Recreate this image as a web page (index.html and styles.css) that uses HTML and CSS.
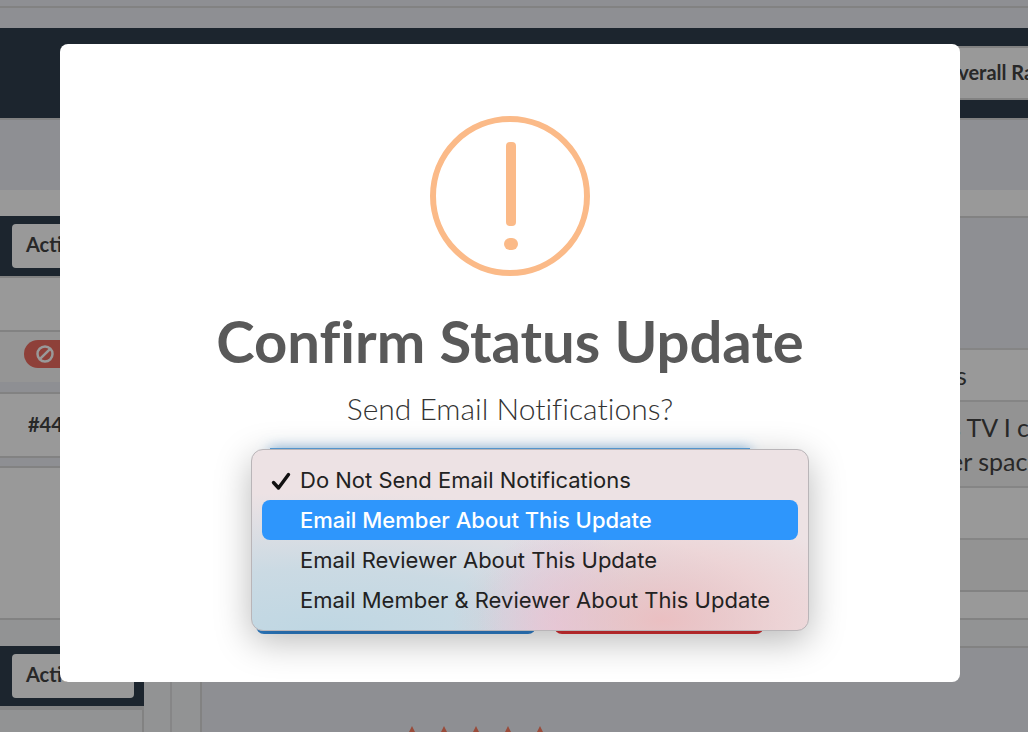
FILE: index.html
```html
<!DOCTYPE html>
<html lang="en">
<head>
    <meta charset="UTF-8">
    <meta name="viewport" content="width=device-width, initial-scale=1.0">
    <title>Confirm Status Update</title>
    <link rel="stylesheet" href="styles.css">
</head>
<body>
    <div class="page">
        <div class="top-strip"></div>
        <header class="header">
            <button type="button" class="rating-btn">Overall Rating</button>
        </header>
        <div class="sub-header"></div>

        <section class="records">
            <div class="side">
                <div class="action-bar">
                    <button type="button" class="action-btn">Actions</button>
                </div>
                <div class="side-row blank"></div>
                <div class="side-row status">
                    <span class="pill">
                        <svg viewBox="0 0 18 18" width="18" height="18" aria-hidden="true">
                            <circle cx="9" cy="9" r="7.5"/>
                            <path d="M3.8 14.2 14.2 3.8"/>
                        </svg>
                    </span>
                </div>
                <div class="side-row number">#4412</div>
                <div class="side-row rest"></div>
            </div>
            <div class="details">
                <div class="details-head"></div>
                <table class="details-table">
                    <tr><th></th><td>is</td></tr>
                    <tr><th></th><td>s TV I could<br>er space</td></tr>
                    <tr><th></th><td></td></tr>
                    <tr><th></th><td></td></tr>
                </table>
            </div>
        </section>

        <section class="records-next">
            <div class="next-side">
                <div class="next-panel">
                    <div class="action-bar">
                        <button type="button" class="action-btn">Actions</button>
                    </div>
                </div>
            </div>
            <div class="review">
                <div class="stars">
                    <svg viewBox="0 0 24 24"><path d="M12 0l4 8 8 .8-6.400 5.700 1.900 8.500L12 18.500 4.500 23l1.900-8.500L0 8.800 8 8z"/></svg>
                    <svg viewBox="0 0 24 24"><path d="M12 0l4 8 8 .8-6.400 5.700 1.900 8.500L12 18.500 4.500 23l1.900-8.500L0 8.800 8 8z"/></svg>
                    <svg viewBox="0 0 24 24"><path d="M12 0l4 8 8 .8-6.400 5.700 1.900 8.500L12 18.500 4.500 23l1.900-8.500L0 8.800 8 8z"/></svg>
                    <svg viewBox="0 0 24 24"><path d="M12 0l4 8 8 .8-6.400 5.700 1.900 8.500L12 18.500 4.500 23l1.900-8.500L0 8.800 8 8z"/></svg>
                    <svg viewBox="0 0 24 24"><path d="M12 0l4 8 8 .8-6.400 5.700 1.900 8.500L12 18.500 4.500 23l1.900-8.500L0 8.800 8 8z"/></svg>
                </div>
            </div>
        </section>
    </div>

    <div class="overlay">
        <div class="modal" role="dialog" aria-labelledby="modalTitle">
            <svg class="warning-icon" viewBox="0 0 160 160" aria-hidden="true">
                <circle cx="80" cy="80" r="77"/>
                <rect x="76" y="26" width="10" height="84" rx="4"/>
                <rect x="74" y="122" width="14" height="12" rx="6"/>
            </svg>
            <h1 id="modalTitle">Confirm Status Update</h1>
            <label for="notify">Send Email Notifications?</label>
            <div class="select-wrap">
                <select id="notify">
                    <option>Do Not Send Email Notifications</option>
                    <option>Email Member About This Update</option>
                    <option>Email Reviewer About This Update</option>
                    <option>Email Member &amp; Reviewer About This Update</option>
                </select>
                <div class="menu" role="listbox">
                    <div class="menu-item" role="option" aria-selected="true">
                        <svg class="check" viewBox="0 0 20 20" aria-hidden="true"><path d="M2.500 11.500 7.500 17 17.500 3.500"/></svg>
                        Do Not Send Email Notifications
                    </div>
                    <div class="menu-item active" role="option">Email Member About This Update</div>
                    <div class="menu-item" role="option">Email Reviewer About This Update</div>
                    <div class="menu-item" role="option">Email Member &amp; Reviewer About This Update</div>
                </div>
            </div>
            <div class="modal-buttons">
                <button type="button" class="btn confirm" aria-label="Confirm"></button>
                <button type="button" class="btn cancel" aria-label="Cancel"></button>
            </div>
        </div>
    </div>
</body>
</html>
```
FILE: styles.css
```css
/* styles.css */
* {
    box-sizing: border-box;
}

body {
    font-family: Lato, "Liberation Sans", sans-serif;
    font-variant-ligatures: none;
    color: #444;
    margin: 0;
    height: 100vh;
    overflow: hidden;
}

.page {
    display: flex;
    flex-direction: column;
    min-height: 100vh;
    background-color: #edeff6;
}

.top-strip {
    height: 8px;
    border-bottom: 2px solid #d9d9d9;
    margin-bottom: 20px;
}

.header {
    display: flex;
    justify-content: flex-end;
    padding: 18px 0;
    background-color: #2f3f4d;
}

.rating-btn {
    width: 100px;
    height: 54px;
    padding: 0 0 2px 12px;
    border: 2px solid #d9d9d9;
    border-right: none;
    background-color: #fff;
    color: #444;
    font: bold 20px Lato, sans-serif;
    text-align: left;
    white-space: nowrap;
    overflow: hidden;
}

.sub-header {
    height: 72px;
    border-top: 2px solid #d9d9d9;
}

/* records */
.records {
    display: flex;
    padding-top: 26px;
    background-color: #fff;
    border-bottom: 2px solid #d9d9d9;
}

.side {
    display: flex;
    flex-direction: column;
    width: 144px;
}

.action-bar {
    padding: 8px 10px 8px 12px;
    background-color: #2f3f4d;
}

.action-btn {
    display: block;
    width: 100%;
    height: 44px;
    padding: 0 14px 4px;
    border: none;
    border-radius: 4px;
    background-color: #fff;
    color: #444;
    font: bold 20px Lato, sans-serif;
    text-align: left;
}

.side-row {
    border-top: 2px solid #d9d9d9;
}

.blank {
    height: 54px;
}

.status {
    height: 52px;
    padding: 8px 0 0 24px;
    background-color: #f8f8f8;
}

.pill {
    display: flex;
    align-items: center;
    height: 28px;
    padding-left: 12px;
    border-radius: 14px;
    background-color: #ed6b5f;
}

.pill svg {
    fill: none;
    stroke: #fff;
    stroke-width: 2.5;
}

.number {
    height: 66px;
    padding-left: 28px;
    border-bottom: 2px solid #d9d9d9;
    box-shadow: 0 -10px #edeff6, 0 8px #edeff6;
    margin: 10px 0 8px;
    font-size: 20px;
    font-weight: bold;
    line-height: 60px;
}

.rest {
    flex: 1;
}

.details {
    flex: 1;
    min-width: 0;
    margin-left: 56px;
    padding-bottom: 26px;
}

.details-head {
    height: 132px;
    border-top: 2px solid #d9d9d9;
    background-color: #edeff6;
}

.details-table {
    width: 100%;
    table-layout: fixed;
    border-collapse: separate;
    border-spacing: 0;
    border-bottom: 2px solid #d9d9d9;
    font-size: 25px;
    line-height: 34px;
}

.details-table th,
.details-table td {
    height: 52px;
    padding: 8px 0;
    border-top: 2px solid #dedede;
}

.details-table td {
    width: 78px;
    white-space: nowrap;
    overflow: hidden;
}

.details-table tr:nth-child(even) {
    background-color: #f6f6f6;
}

/* next record */
.records-next {
    display: flex;
    flex: 1;
    background-color: #f4f5f7;
}

.next-side {
    display: flex;
    width: 172px;
    padding-top: 26px;
    border-right: 2px solid #e0e0e2;
}

.next-panel {
    width: 144px;
    border-right: 2px solid #d9d9d9;
}

.next-panel .action-bar {
    margin-right: -2px;
    border-bottom: 4px solid #dedede;
    height: 64px;
}

.review {
    flex: 1;
    margin: 26px 0 0 28px;
    padding: 78px 0 0 196px;
    border-top: 2px solid #d9d9d9;
    border-left: 2px solid #d9d9d9;
    background-color: #edeff6;
}

.stars {
    display: flex;
    gap: 4px;
    height: 6px;
    overflow: hidden;
}

.stars svg {
    width: 28px;
    height: 28px;
    flex: none;
    fill: #ff7d61;
}

/* modal */
.overlay {
    position: fixed;
    inset: 0;
    display: flex;
    align-items: flex-start;
    padding: 44px 68px 50px 60px;
    background-color: rgba(0, 0, 0, 0.4);
}

.modal {
    flex: 1;
    display: flex;
    flex-direction: column;
    align-items: center;
    padding: 72px 20px 48px;
    border-radius: 8px;
    background-color: #fff;
}

.warning-icon {
    width: 160px;
    height: 160px;
    fill: #fbba88;
}

.warning-icon circle {
    fill: none;
    stroke: #fbba88;
    stroke-width: 6;
}

h1 {
    margin: 30px 0 0;
    color: #595959;
    font-size: 58px;
    font-weight: bold;
    line-height: 70px;
}

label {
    margin-top: 12px;
    color: #333;
    font-size: 30px;
    font-weight: 300;
    line-height: 40px;
}

.select-wrap {
    position: relative;
    width: 480px;
    margin-top: 20px;
}

select {
    display: block;
    width: 100%;
    height: 62px;
    border: 2px solid #5aa0dc;
    border-radius: 0;
    background-color: #fff;
    box-shadow: 0 0 12px rgba(66, 145, 215, 0.6);
    font-size: 24px;
}

/* open list lies over the select and the buttons */
.menu {
    position: absolute;
    top: 1px;
    left: -19px;
    right: -59px;
    padding: 10px;
    border: 1px solid #b9b5b8;
    border-radius: 12px;
    background:
        radial-gradient(ellipse 210px 110px at 410px 170px, rgba(236, 188, 190, 0.9), transparent),
        radial-gradient(ellipse 80px 120px at 305px 182px, rgba(228, 205, 230, 0.9), transparent),
        radial-gradient(ellipse 460px 140px at 70px 182px, #bfd7e3, rgba(194, 216, 227, 0.8) 45%, transparent),
        #ede2e4;
    box-shadow: 0 10px 36px rgba(0, 0, 0, 0.28);
    color: #222;
    font-family: Inter, sans-serif;
    font-size: 22px;
    line-height: 40px;
}

.menu-item {
    position: relative;
    padding-left: 38px;
    border-radius: 8px;
    white-space: nowrap;
}

.menu-item.active {
    background-color: #2e96fc;
    color: #fff;
    font-weight: 500;
}

.check {
    position: absolute;
    top: 11px;
    left: 9px;
    width: 20px;
    height: 20px;
    fill: none;
    stroke: #111;
    stroke-width: 3.4;
    stroke-linecap: round;
    stroke-linejoin: round;
}

.modal-buttons {
    display: flex;
    gap: 18px;
    margin-top: 70px;
}

.btn {
    height: 54px;
    border: none;
    border-radius: 8px;
    color: #fff;
}

.confirm {
    width: 280px;
    background-color: #2f80cc;
}

.cancel {
    width: 210px;
    background-color: #d83033;
}
```
